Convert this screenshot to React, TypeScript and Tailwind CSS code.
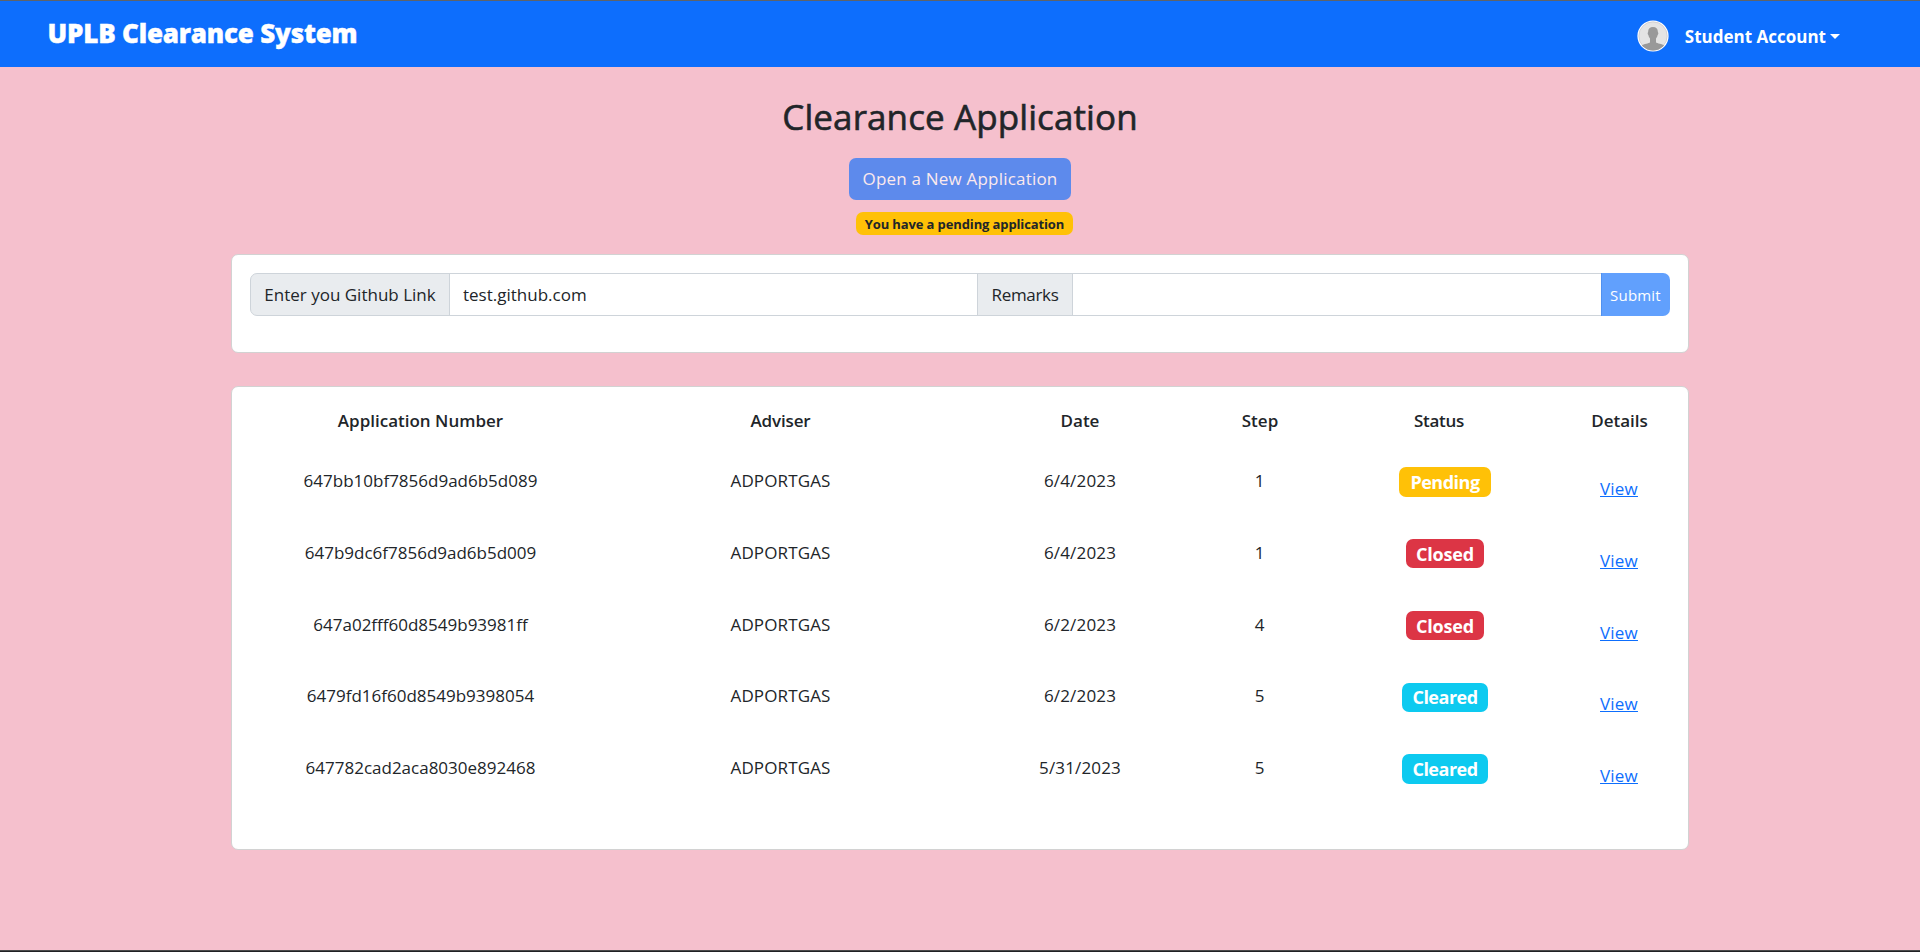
type Status = "Pending" | "Closed" | "Cleared";

interface Application {
  id: string;
  adviser: string;
  date: string;
  step: number;
  status: Status;
}

const applications: Application[] = [
  { id: "647bb10bf7856d9ad6b5d089", adviser: "ADPORTGAS", date: "6/4/2023", step: 1, status: "Pending" },
  { id: "647b9dc6f7856d9ad6b5d009", adviser: "ADPORTGAS", date: "6/4/2023", step: 1, status: "Closed" },
  { id: "647a02fff60d8549b93981ff", adviser: "ADPORTGAS", date: "6/2/2023", step: 4, status: "Closed" },
  { id: "6479fd16f60d8549b9398054", adviser: "ADPORTGAS", date: "6/2/2023", step: 5, status: "Cleared" },
  { id: "647782cad2aca8030e892468", adviser: "ADPORTGAS", date: "5/31/2023", step: 5, status: "Cleared" },
];

const badgeStyles: Record<Status, string> = {
  Pending: "w-[92px] bg-[#ffc107] tracking-[-0.5px]",
  Closed: "w-[78px] bg-[#dc3545] tracking-[-0.2px]",
  Cleared: "w-[86px] bg-[#0dcaf0] tracking-[-0.5px]",
};

const columns = "grid grid-cols-[3fr_3fr_2fr_1fr_2fr_1fr] items-center text-center";

function Avatar() {
  return (
    <svg width="32" height="32" viewBox="0 0 32 32" aria-hidden="true">
      <defs>
        <clipPath id="avatar-clip">
          <circle cx="16" cy="16" r="14.6" />
        </clipPath>
      </defs>
      <circle cx="16" cy="16" r="15.6" fill="#ffffff" />
      <circle cx="16" cy="16" r="14.2" fill="#e4e4e4" stroke="#c9c5c8" strokeWidth="0.7" />
      <g clipPath="url(#avatar-clip)" fill="#999999">
        <path d="M11.1 12.2C11 8.6 13 6.900 16 6.900s5 1.700 4.900 5.300c.7.3.5 2.300-.3 2.800-.3 1.700-.9 2.700-1.600 3.500v4c.9 1 6.200 1 8.500 3.300V32h-23v-6.200c2.300-2.300 7.600-2.300 8.500-3.300v-4c-.7-.8-1.300-1.800-1.600-3.500-.8-.5-1-2.500-.3-2.800z" />
      </g>
    </svg>
  );
}

function Navbar() {
  return (
    <header className="flex h-[67px] items-start justify-between border-t border-[#5f6368] bg-[#0d6efd] pr-20 pl-[47.5px] text-white">
      <span className="pt-[14px] text-[26px] leading-9 font-extrabold tracking-[-0.2px] [-webkit-text-stroke:0.4px_white]">
        UPLB Clearance System
      </span>
      <div className="flex items-start pt-[18.5px]">
        <Avatar />
        <button className="ml-4 flex items-center pt-1 text-[17px] leading-[26px] font-bold">
          Student Account
          <svg className="ml-1" width="10" height="5" viewBox="0 0 10 5" fill="currentColor" aria-hidden="true">
            <path d="M0 0h10L5 5z" />
          </svg>
        </button>
      </div>
    </header>
  );
}

function GithubForm() {
  return (
    <section className="h-[99px] rounded-[7px] border border-[#d2d2d2] bg-white px-[18px] pt-[18px]">
      <div className="flex h-[43px] text-[17px]">
        <span className="flex w-[200px] items-center justify-center rounded-l-[7px] border border-[#ced4da] bg-[#e9ecef]">
          Enter you Github Link
        </span>
        <input
          className="-ml-px w-[529px] border border-[#ced4da] bg-white pl-[13px] outline-none"
          defaultValue="test.github.com"
        />
        <span className="-ml-px flex w-[96px] items-center justify-center border border-[#ced4da] bg-[#e9ecef] tracking-[-0.3px]">
          Remarks
        </span>
        <input className="-ml-px min-w-0 flex-1 border border-[#ced4da] bg-white px-[14px] outline-none" />
        <button className="relative -ml-px w-[69px] rounded-r-[7px] bg-[#0d6efd] pt-px text-[15px] tracking-[0.2px] text-white opacity-65">
          Submit
        </button>
      </div>
    </section>
  );
}

function ApplicationTable() {
  return (
    <section className="mt-[33.4px] h-[463.2px] rounded-[7px] border border-[#d2d2d2] bg-white px-2 pt-[9px] text-[17px]">
      <div className={`${columns} h-[48.5px] font-semibold`}>
        <span className="pl-px">Application Number</span>
        <span className="pl-px tracking-[-0.15px]">Adviser</span>
        <span>Date</span>
        <span>Step</span>
        <span className="pr-[2px] tracking-[-0.3px]">Status</span>
        <span className="pr-px">Details</span>
      </div>
      {applications.map((app) => (
        <div key={app.id} className={`${columns} h-[71.75px]`}>
          <span className="pl-px">{app.id}</span>
          <span className="pl-px tracking-[0.12px]">{app.adviser}</span>
          <span className="tracking-[0.16px]">{app.date}</span>
          <span className="pr-px">{app.step}</span>
          <span className="flex justify-center pt-[2.5px] pl-[10px]">
            <span
              className={`flex h-[29.25px] items-center justify-center rounded-[7px] text-[18px] leading-none font-bold text-white ${badgeStyles[app.status]}`}
            >
              {app.status}
            </span>
          </span>
          <a href="#" className="pt-4 pr-[2px] tracking-[0.2px] text-[#0d6efd] underline decoration-1 underline-offset-[1px]">
            View
          </a>
        </div>
      ))}
    </section>
  );
}

export default function App() {
  return (
    <div className="flex h-[952px] flex-col overflow-hidden bg-[#f5c0cd] font-['Open_Sans','Noto_Sans',sans-serif] text-[#212529]">
      <Navbar />
      <main className="mx-auto flex w-[1458px] flex-1 flex-col">
        <h1 className="pt-[28px] text-center text-[35px] leading-[44px] font-medium tracking-[0.1px] [-webkit-text-stroke:0.6px_#212529]">
          Clearance Application
        </h1>
        <button className="mx-auto mt-[19px] h-[42px] w-[222px] rounded-[7px] bg-[#0d6efd] text-[17px] tracking-[0.2px] text-white opacity-65">
          Open a New Application
        </button>
        <div className="mt-3 mb-[19px] flex justify-center pl-[9px]">
          <span className="flex h-[23px] w-[217px] items-center justify-center rounded-[7px] bg-[#ffc107] pt-[2px] text-[13px] font-bold tracking-[-0.12px]">
            You have a pending application
          </span>
        </div>
        <GithubForm />
        <ApplicationTable />
      </main>
      <footer className="h-[2px] border-t border-[#4a4a4a] bg-[#202124]" />
    </div>
  );
}
